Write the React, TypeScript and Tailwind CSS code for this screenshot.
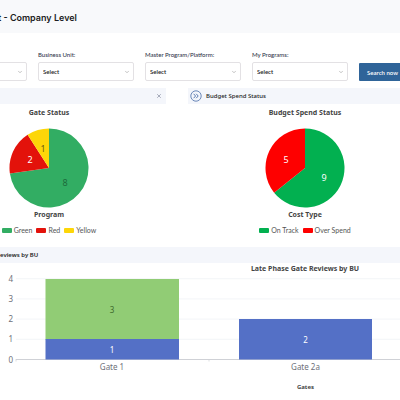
import React from "react";
import { ChevronDown, X } from "lucide-react";

type Slice = { label: string; value: number; swatch: string; fill: string; text: string; x: number; y: number };

const gateSlices: Slice[] = [
  { label: "Green", value: 8, swatch: "bg-[#32ad63]", fill: "#32ad63", text: "#1d6b3c", x: 56, y: 58 },
  { label: "Red", value: 2, swatch: "bg-[#e3120b]", fill: "#e3120b", text: "#ffffff", x: 21, y: 35 },
  { label: "Yellow", value: 1, swatch: "bg-[#fdd608]", fill: "#fdd608", text: "#6b5c10", x: 34, y: 24 },
];

const budgetSlices: Slice[] = [
  { label: "On Track", value: 9, swatch: "bg-[#02b050]", fill: "#02b050", text: "#ffffff", x: 59, y: 53 },
  { label: "Over Spend", value: 5, swatch: "bg-[#fe0000]", fill: "#fe0000", text: "#ffffff", x: 21, y: 35 },
];

const filters = ["", "Business Unit:", "Master Program/Platform:", "My Programs:"];

const PieChart = ({ slices }: { slices: Slice[] }): React.JSX.Element => {
  const total = slices.reduce((sum, s) => sum + s.value, 0);
  const point = (v: number) => {
    const a = (v / total) * 2 * Math.PI;
    return `${40 + 39.5 * Math.sin(a)} ${40 - 39.5 * Math.cos(a)}`;
  };
  let start = 0;

  return (
    <svg viewBox="0 0 80 80" className="mt-2.5 size-20">
      {slices.map((s) => {
        const from = start;
        start += s.value;
        return (
          <path
            key={s.label}
            d={`M40 40L${point(from)}A39.5 39.5 0 ${s.value / total > 0.5 ? 1 : 0} 1 ${point(start)}Z`}
            fill={s.fill}
          />
        );
      })}
      {slices.map((s) => (
        <text key={s.label} x={s.x} y={s.y} fill={s.text} textAnchor="middle" className="text-[9px]">
          {s.value}
        </text>
      ))}
    </svg>
  );
};

const PieCard = ({
  title,
  name,
  slices,
  showHeading = false,
}: {
  title: string;
  name: string;
  slices: Slice[];
  showHeading?: boolean;
}): React.JSX.Element => (
  <section>
    <header className="flex h-4 items-center gap-1 bg-[#f4f6fb] px-0.5 text-[#222]">
      <svg viewBox="0 0 12 12" className="size-3" fill="none" stroke="#4a6da8">
        <circle cx="6" cy="6" r="5.2" strokeWidth="0.8" />
        <path d="M3.6 3.8L5.6 6L3.6 8.2M6.2 3.8L8.2 6L6.2 8.2" strokeWidth="0.9" />
      </svg>
      {showHeading && <h2 className="font-['Noto_Sans',sans-serif] text-[6px] font-medium">{title}</h2>}
      <button type="button" aria-label="Close" className="mr-0.5 ml-auto text-[#8d93a5]">
        <X className="size-1.5" strokeWidth={3} />
      </button>
    </header>
    <div className="flex flex-col items-center font-['Noto_Sans',sans-serif] text-[#444]">
      <h3 className="mt-1 text-[7px] leading-[10px] font-bold">{title}</h3>
      <PieChart slices={slices} />
      <p className="mt-0.5 text-[7px] leading-[10px] font-bold">{name}</p>
      <ul className="mt-1.5 flex gap-1 font-[Lato,sans-serif] text-[7px] leading-2 text-[#555]">
        {slices.map((s) => (
          <li key={s.label} className="flex items-center gap-0.5">
            <span className={`h-[5px] w-[10px] rounded-[1px] ${s.swatch}`} />
            {s.label}
          </li>
        ))}
      </ul>
    </div>
  </section>
);

const ReviewsChart = (): React.JSX.Element => (
  <svg viewBox="0 0 400 137" className="block w-full font-['Noto_Sans',sans-serif]">
    <text x="305" y="8" textAnchor="middle" fill="#444" className="text-[7px] font-bold">
      Late Phase Gate Reviews by BU
    </text>
    {[4, 3, 2, 1, 0].map((n) => (
      <g key={n}>
        <path
          d={`M16 ${96.5 - n * 20.2}H400`}
          stroke={n === 0 ? "#cfd1d6" : "#eef0f5"}
          strokeWidth={n === 0 ? 1 : 0.7}
        />
        <text x="13" y={99.5 - n * 20.2} textAnchor="end" fill="#6e7079" className="text-[8px]">
          {n}
        </text>
      </g>
    ))}
    <path d="M16 96V98.500M209 96V98.500" stroke="#cfd1d6" strokeWidth="0.7" />
    <rect x="45.500" y="16" width="133.500" height="60.500" fill="#91cc75" />
    <rect x="45.500" y="76" width="133.500" height="20.500" fill="#5470c6" />
    <rect x="239" y="56" width="133" height="40.500" fill="#5470c6" />
    <g textAnchor="middle" className="text-[8px]">
      <text x="112" y="50" fill="#3f6b2c">3</text>
      <text x="112" y="90" fill="#fff">1</text>
      <text x="305.500" y="80" fill="#fff">2</text>
      <text x="112" y="107" fill="#6e7079">Gate 1</text>
      <text x="305.500" y="107" fill="#6e7079">Gate 2a</text>
    </g>
    <text x="305.500" y="126" textAnchor="middle" fill="#444" className="text-[6px] font-bold">
      Gates
    </text>
  </svg>
);

export default function App(): React.JSX.Element {
  return (
    <div className="min-h-screen overflow-hidden bg-white">
      <header className="flex h-[33px] items-center bg-[#f8f9fb]">
        <h1 className="-ml-0.5 pt-0.5 font-[Inter,sans-serif] text-[9px] font-semibold whitespace-nowrap text-[#1c1c22]">
          t - Company Level
        </h1>
      </header>

      <main className="-mr-[22px] -ml-[68px]">
        <form className="-ml-px flex items-end gap-[11px] pt-[17px] font-[Lato,sans-serif] text-[6px]">
          {filters.map((f) => (
            <label key={f} className="flex flex-1 flex-col gap-[3px] leading-[9px] font-medium whitespace-nowrap text-[#33384d]">
              {f}
              <span className="grid items-center">
                <select
                  aria-label={f || "Filter"}
                  className="col-start-1 row-start-1 h-[19px] w-full appearance-none rounded-[2px] border border-[#e3e1e4] bg-white px-1 font-semibold text-[#222]"
                >
                  <option>{f ? "Select" : ""}</option>
                </select>
                <ChevronDown className="pointer-events-none col-start-1 row-start-1 mr-1 size-1.5 justify-self-end text-[#888]" />
              </span>
            </label>
          ))}
          <button type="button" className="mr-4 h-[18px] w-[47px] rounded-[1px] bg-[#2f6499] text-[6px] font-semibold whitespace-nowrap text-white">
            Search now
          </button>
        </form>

        <div className="mt-[7px] grid grid-cols-2 gap-[22px]">
          <PieCard title="Gate Status" name="Program" slices={gateSlices} />
          <PieCard title="Budget Spend Status" name="Cost Type" slices={budgetSlices} showHeading />
        </div>
      </main>

      <section className="mt-[13px]">
        <header className="flex h-4 items-center bg-[#f4f6fb]">
          <h2 className="font-['Noto_Sans',sans-serif] text-[6px] font-semibold whitespace-nowrap text-[#222]">
            eviews by BU
          </h2>
        </header>
        <ReviewsChart />
      </section>
    </div>
  );
}
